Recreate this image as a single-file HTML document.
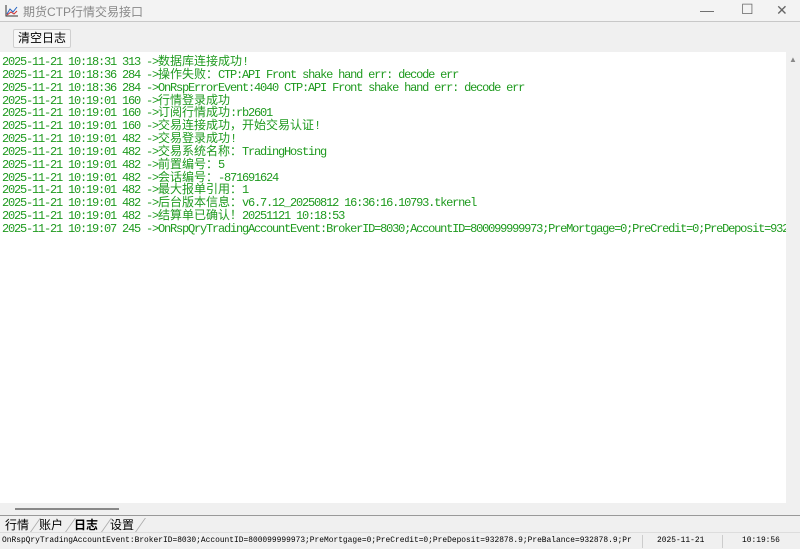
<!DOCTYPE html>
<html><head><meta charset="utf-8"><style>
*{margin:0;padding:0;box-sizing:border-box}
body{width:800px;height:549px;background:#f0f0f0;position:relative;overflow:hidden;font-family:"Liberation Sans","Noto Sans CJK SC",sans-serif}
#title{position:absolute;left:0;top:0;width:800px;height:22px;background:#f3f3f3;border-bottom:1px solid #c8c8c8}
#title .t{position:absolute;left:23px;top:3px;font-size:12px;color:#888}
#title .ctl{position:absolute;top:2px;font-size:14px;color:#666}
#btn{position:absolute;left:13px;top:29px;width:58px;height:19px;background:#f7f7f7;border:1px solid #cfcfcf;border-radius:2px;font-size:12px;text-align:center;line-height:17px;color:#000}
#log{position:absolute;left:0;top:52px;width:786px;height:451px;background:#fff;overflow:hidden}
#log pre{position:absolute;left:2px;top:4px;font-family:"Liberation Mono","Noto Sans CJK SC",monospace;font-size:12px;letter-spacing:-1.2px;line-height:12.85px;color:#1f9a1f;white-space:pre}
#log pre b{font-weight:normal;font-size:12px;letter-spacing:0;font-family:"Noto Sans CJK SC",sans-serif;line-height:10px}
#vs{position:absolute;left:786px;top:52px;width:14px;height:451px;background:#f0f0f0}
#hs{position:absolute;left:0;top:503px;width:800px;height:12px;background:#f0f0f0}
#hs i{position:absolute;left:15px;top:5px;width:104px;height:2px;background:#888}
#tabs{position:absolute;left:0;top:515px;width:800px;height:17px;border-top:1px solid #999;background:#f0f0f0;font-size:11px}
#tabs span{position:absolute;top:1px}
#tabs i{position:absolute;top:2px;width:1px;height:14px;background:#aaa;transform:skewX(-35deg)}
#status{position:absolute;left:0;top:532px;width:800px;height:17px;background:#f0f0f0;border-top:1px solid #ddd;font-family:"Liberation Mono",monospace;font-size:7.9px;line-height:16px;color:#000}
</style></head><body>
<div id="title">
<svg style="position:absolute;left:5px;top:4px" width="14" height="13"><path d="M1 1V12H13" stroke="#333" fill="none"/><path d="M2 10L5 5L8 8L12 3" stroke="#2060c0" fill="none"/><path d="M2 11L6 8L9 10L12 7" stroke="#d03030" fill="none"/></svg>
<span class="t">期货CTP行情交易接口</span>
<span class="ctl" style="left:700px">&#8212;</span>
<span class="ctl" style="left:741px;top:1px">&#9744;</span>
<span class="ctl" style="left:776px">&#10005;</span>
</div>
<div id="btn">清空日志</div>
<div id="log"><pre>2025-11-21 10:18:31 313 -&gt;<b>数据库连接成功</b>!
2025-11-21 10:18:36 284 -&gt;<b>操作失败：</b>CTP:API Front shake hand err: decode err
2025-11-21 10:18:36 284 -&gt;OnRspErrorEvent:4040 CTP:API Front shake hand err: decode err
2025-11-21 10:19:01 160 -&gt;<b>行情登录成功</b>
2025-11-21 10:19:01 160 -&gt;<b>订阅行情成功</b>:rb2601
2025-11-21 10:19:01 160 -&gt;<b>交易连接成功，开始交易认证</b>!
2025-11-21 10:19:01 482 -&gt;<b>交易登录成功</b>!
2025-11-21 10:19:01 482 -&gt;<b>交易系统名称：</b>TradingHosting
2025-11-21 10:19:01 482 -&gt;<b>前置编号：</b>5
2025-11-21 10:19:01 482 -&gt;<b>会话编号：</b>-871691624
2025-11-21 10:19:01 482 -&gt;<b>最大报单引用：</b>1
2025-11-21 10:19:01 482 -&gt;<b>后台版本信息：</b>v6.7.12_20250812 16:36:16.10793.tkernel
2025-11-21 10:19:01 482 -&gt;<b>结算单已确认！</b>20251121 10:18:53
2025-11-21 10:19:07 245 -&gt;OnRspQryTradingAccountEvent:BrokerID=8030;AccountID=800099999973;PreMortgage=0;PreCredit=0;PreDeposit=932878.9</pre></div>
<div id="vs"><span style="position:absolute;left:3px;top:3px;font-size:8px;color:#888">&#9650;</span></div>
<div id="hs"><i></i></div>
<div id="tabs" style="font-size:12px"><span style="left:5px;top:0">行情</span><i style="left:35px"></i><span style="left:39px;top:0">账户</span><i style="left:70px"></i><span style="left:74px;top:0;font-weight:bold">日志</span><i style="left:106px"></i><span style="left:110px;top:0">设置</span><i style="left:140px"></i></div>
<div id="status"><span style="position:absolute;left:2px;width:638px;overflow:hidden;white-space:nowrap">OnRspQryTradingAccountEvent:BrokerID=8030;AccountID=800099999973;PreMortgage=0;PreCredit=0;PreDeposit=932878.9;PreBalance=932878.9;Pr</span><i style="position:absolute;left:642px;top:2px;width:1px;height:13px;background:#ccc"></i><span style="position:absolute;left:657px">2025-11-21</span><i style="position:absolute;left:722px;top:2px;width:1px;height:13px;background:#ccc"></i><span style="position:absolute;left:742px">10:19:56</span></div>
</body></html>
